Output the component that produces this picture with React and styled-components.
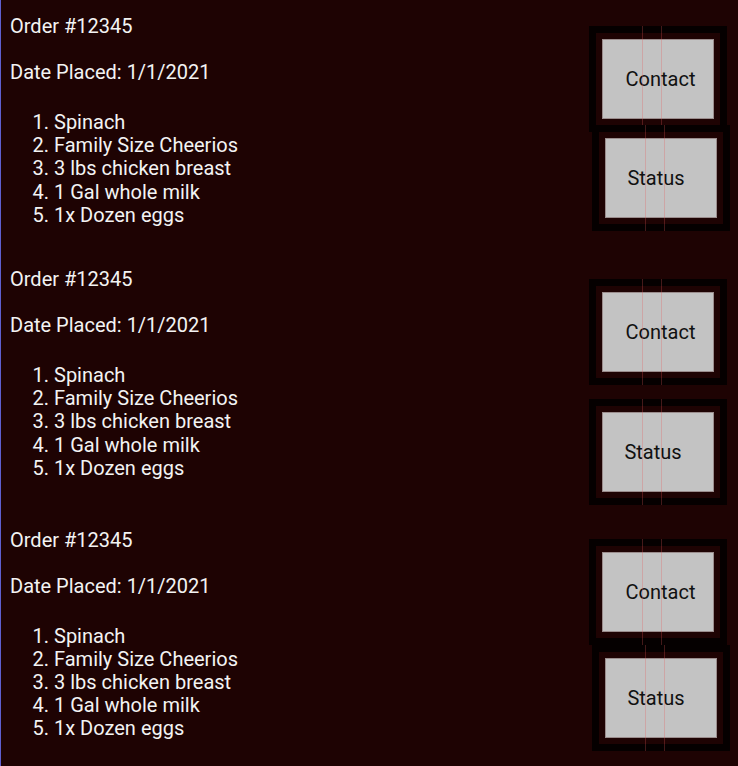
import React from "react"
import styled, { createGlobalStyle } from "styled-components"

const GlobalStyle = createGlobalStyle`
  html, body {
    margin: 0;
    padding: 0;
    background: #1e0303;
  }
  body {
    font-family: Roboto, "Liberation Sans", sans-serif;
  }
`

const Page = styled.main`
  min-height: 766px;
  border-left: 1px solid #5f5fcf;
  box-sizing: border-box;
  color: #f3f3f3;
  font-size: 20px;
`

const Row = styled.section`
  display: flex;
  justify-content: space-between;
  align-items: flex-start;
  padding: 0 11px 0 9px;
`

const Info = styled.div`
  padding-top: 15px;
  padding-bottom: 26px;
`

const Title = styled.p`
  margin: 0;
  line-height: 23px;
`

const Placed = styled(Title)`
  margin-top: 23px;
`

const Items = styled.ol`
  margin: 27px 0 0;
  padding-left: 44px;
  line-height: 23.2px;
`

const Actions = styled.div`
  display: flex;
  flex-direction: column;
  align-items: flex-start;
  padding-top: 25.5px;
  padding-bottom: 9px;
`

const Frame = styled.div`
  position: relative;
  border: 7px solid #050000;
  padding: 6px;
  margin-top: ${(p) => p.$top || 0}px;
  margin-left: ${(p) => p.$shift || 0}px;
  margin-right: ${(p) => -(p.$shift || 0)}px;

  &::before,
  &::after {
    content: "";
    position: absolute;
    top: -7px;
    bottom: -7px;
    width: 1px;
    background: rgba(235, 90, 90, 0.28);
    pointer-events: none;
  }
  &::before {
    left: 46px;
  }
  &::after {
    left: 65px;
  }
`

const Button = styled.button`
  display: block;
  width: 112px;
  height: 80px;
  box-sizing: border-box;
  background: #c3c3c3;
  border: 1px solid #9a8c8c;
  color: #111;
  font-family: Roboto, "Liberation Sans", sans-serif;
  font-size: 20px;
  padding: 0 ${(p) => (p.$nudge < 0 ? -p.$nudge * 2 : 0)}px 0
    ${(p) => (p.$nudge > 0 ? p.$nudge * 2 : 0)}px;
  text-align: center;
  cursor: pointer;
`

const orders = [
  { id: 1, statusTop: -7, statusShift: 3 },
  { id: 2, statusTop: 14, statusShift: 0 },
  { id: 3, statusTop: 0, statusShift: 3 },
]

const items = [
  "Spinach",
  "Family Size Cheerios",
  "3 lbs chicken breast",
  "1 Gal whole milk",
  "1x Dozen eggs",
]

const Order = ({ order }) => (
  <Row>
    <Info>
      <Title>Order #12345</Title>
      <Placed>Date Placed: 1/1/2021</Placed>
      <Items>
        {items.map((item) => (
          <li key={item}>{item}</li>
        ))}
      </Items>
    </Info>
    <Actions>
      <Frame>
        <Button $nudge={2.5}>Contact</Button>
      </Frame>
      <Frame $top={order.statusTop} $shift={order.statusShift}>
        <Button $nudge={-5}>Status</Button>
      </Frame>
    </Actions>
  </Row>
)

export default function App() {
  return (
    <>
      <GlobalStyle />
      <Page>
        {orders.map((order) => (
          <Order key={order.id} order={order} />
        ))}
      </Page>
    </>
  )
}
